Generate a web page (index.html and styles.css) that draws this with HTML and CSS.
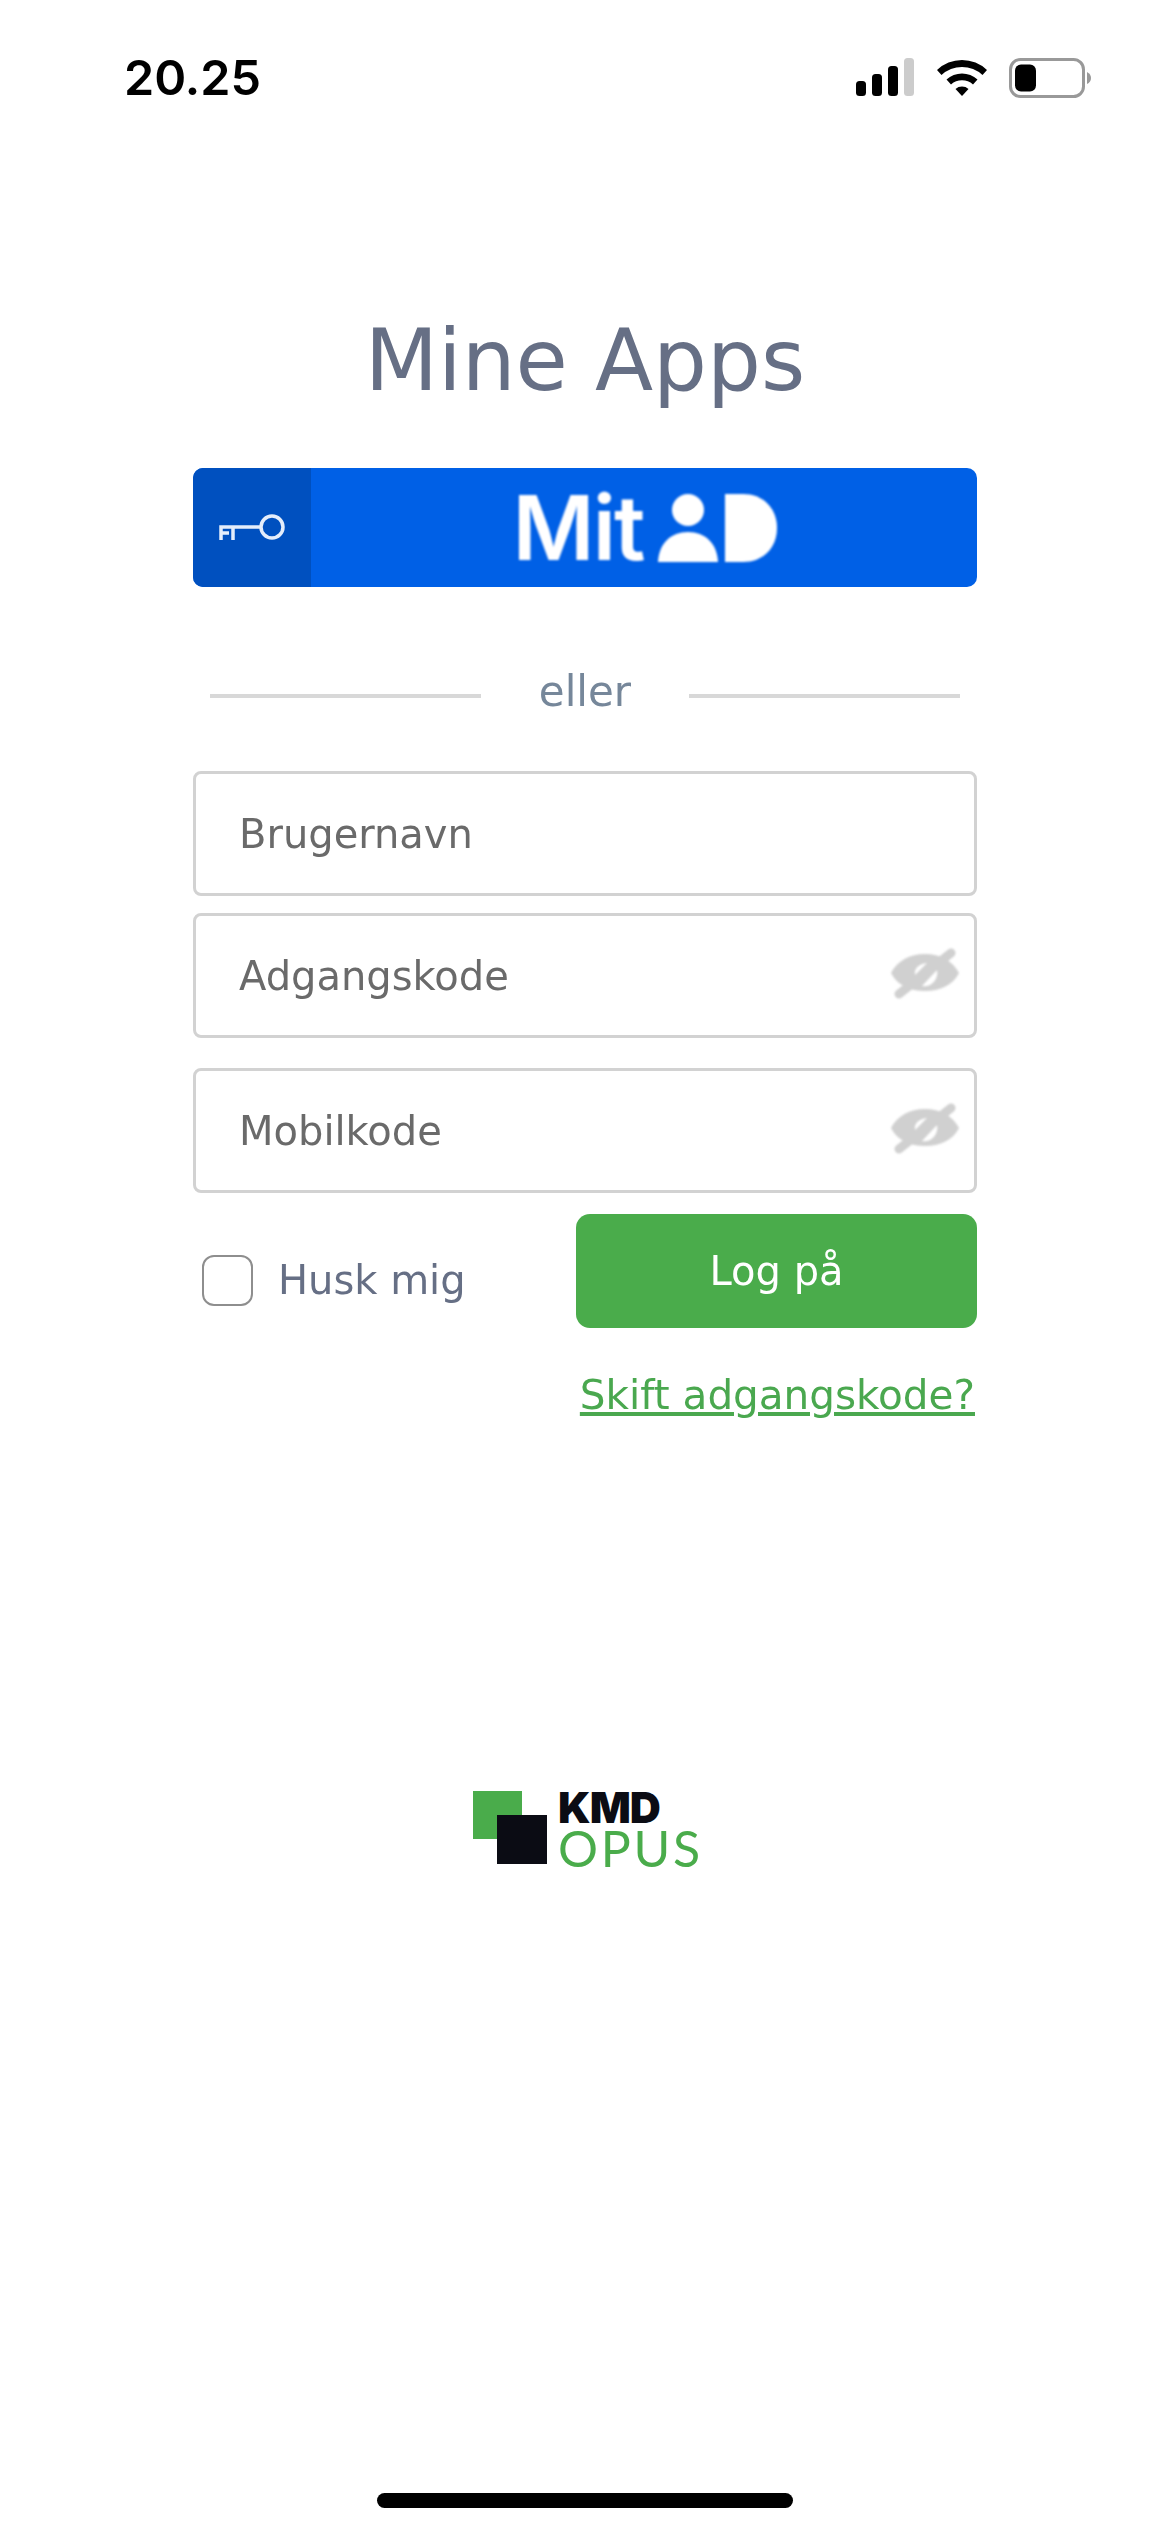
FILE: index.html
```html
<!DOCTYPE html>
<html lang="da">
<head>
<meta charset="utf-8">
<title>Mine Apps</title>
<link rel="stylesheet" href="styles.css">
</head>
<body>
<div class="screen">
  <header class="status">
    <span class="time">20.25</span>
    <div class="status-icons">
      <svg class="signal" width="58" height="38" viewBox="0 0 58 38">
        <rect x="0" y="23" width="10" height="15" rx="3.5" fill="#000"/>
        <rect x="16" y="16" width="10" height="22" rx="3.5" fill="#000"/>
        <rect x="32" y="8" width="10" height="30" rx="3.5" fill="#000"/>
        <rect x="48" y="0" width="10" height="38" rx="3.5" fill="#ccc"/>
      </svg>
      <svg class="wifi" width="50" height="38" viewBox="0 0 50 38">
        <path d="M0 12 A36 36 0 0 1 50 12 L45.500 17 A30 30 0 0 0 4.500 17 Z" fill="#000"/>
        <path d="M9.500 21.500 A23 23 0 0 1 40.500 21.500 L36 26.500 A16.500 16.500 0 0 0 14 26.500 Z" fill="#000"/>
        <path d="M18.500 31 A10 10 0 0 1 31.500 31 L25 38 Z" fill="#000"/>
      </svg>
      <svg class="battery" width="82" height="40" viewBox="0 0 82 40">
        <rect x="1.500" y="1.500" width="73" height="37" rx="10" fill="none" stroke="#999" stroke-width="3"/>
        <rect x="6" y="6.500" width="21" height="27" rx="6" fill="#000"/>
        <path d="M78 14 Q82 16 82 20 Q82 24 78 26 Z" fill="#999"/>
      </svg>
    </div>
  </header>

  <main class="login">
    <h1 class="title">Mine Apps</h1>

    <a class="mitid">
      <span class="mitid-key">
        <svg width="68" height="28" viewBox="0 0 68 28">
          <circle cx="54" cy="13" r="11" fill="none" stroke="#e4edfb" stroke-width="3.500"/>
          <path d="M43 13 H3 V26 M15 13 V26 M3 19 H11" fill="none" stroke="#e4edfb" stroke-width="3.500"/>
        </svg>
      </span>
      <span class="mitid-logo">
        <span class="mitid-word">Mit</span>
        <svg class="mitid-person" width="60" height="68" viewBox="0 0 60 68">
          <circle cx="30" cy="16" r="16" fill="#fff"/>
          <path d="M0 68 C1 49 13 38 30 38 C47 38 59 49 60 68 Z" fill="#fff"/>
        </svg>
        <svg class="mitid-d" width="52" height="68" viewBox="0 0 52 68">
          <path d="M0 0 H18 C38 0 52 14 52 34 C52 54 38 68 18 68 H0 Z" fill="#fff"/>
        </svg>
      </span>
    </a>

    <div class="divider">
      <span class="divider-line"></span>
      <span class="divider-text">eller</span>
      <span class="divider-line"></span>
    </div>

    <div class="field field-user"><span class="field-label">Brugernavn</span></div>
    <div class="field field-code">
      <span class="field-label">Adgangskode</span>
      <svg class="eye" width="70" height="52" viewBox="0 0 70 52">
        <path fill="#d0d0d0" fill-rule="evenodd" d="M1 26 C7 14 20 7 35 7 C50 7 63 14 69 26 C63 38 50 44 35 44 C20 44 7 38 1 26 Z M25 28 C24 21 29 17 37 16 Z M47 23 C49 32 41 41 32 39 Z"/>
        <path stroke="#d0d0d0" stroke-width="9" stroke-linecap="round" d="M9 47 L61 6"/>
      </svg>
    </div>
    <div class="field field-mobile">
      <span class="field-label">Mobilkode</span>
      <svg class="eye" width="70" height="52" viewBox="0 0 70 52">
        <path fill="#d0d0d0" fill-rule="evenodd" d="M1 26 C7 14 20 7 35 7 C50 7 63 14 69 26 C63 38 50 44 35 44 C20 44 7 38 1 26 Z M25 28 C24 21 29 17 37 16 Z M47 23 C49 32 41 41 32 39 Z"/>
        <path stroke="#d0d0d0" stroke-width="9" stroke-linecap="round" d="M9 47 L61 6"/>
      </svg>
    </div>

    <div class="actions">
      <label class="remember">
        <span class="checkbox"></span>
        <span class="remember-text">Husk mig</span>
      </label>
      <button class="submit"><span class="submit-text">Log på</span></button>
    </div>

    <a class="change-link">Skift adgangskode?</a>
  </main>

  <div class="brand">
    <div class="brand-mark">
      <span class="mark-green"></span>
      <span class="mark-dark"></span>
    </div>
    <div class="brand-text">
      <span class="brand-kmd">KMD</span>
      <span class="brand-opus">OPUS</span>
    </div>
  </div>

  <div class="home-bar"></div>
</div>
</body>
</html>
```
FILE: styles.css
```css
* { box-sizing: border-box; }
html, body { margin: 0; padding: 0; background: #fff; }
.screen {
  width: 1170px;
  height: 2532px;
  display: flex;
  flex-direction: column;
  align-items: center;
  font-family: "DejaVu Sans", sans-serif;
}
.status {
  width: 100%;
  height: 106px;
  padding: 50px 79px 0 124px;
  display: flex;
  justify-content: space-between;
  align-items: flex-start;
}
.time {
  font-family: Inter, sans-serif;
  font-size: 48.500px;
  font-weight: 600;
  line-height: 56px;
  color: #000;
}
.status-icons { display: flex; align-items: flex-start; margin-top: 8px; }
.signal { margin-right: 23px; }
.wifi { margin-right: 22px; }

.login { width: 784px; display: flex; flex-direction: column; }
.title {
  margin: 205px 0 0;
  height: 157px;
  text-align: center;
  font-size: 85px;
  font-weight: 400;
  line-height: 99px;
  color: #666f85;
  filter: blur(0.4px);
}
.mitid {
  height: 119px;
  border-radius: 10px;
  background: #0060e6;
  display: flex;
  overflow: hidden;
}
.mitid-key {
  width: 118px;
  background: #0050bf;
  display: flex;
  align-items: center;
  justify-content: center;
  filter: blur(0.6px);
}
.mitid-logo {
  flex: 1;
  display: flex;
  align-items: center;
  justify-content: center;
  padding-left: 2px;
  filter: blur(0.8px);
}
.mitid-word {
  font-family: Inter, sans-serif;
  font-size: 89px;
  font-weight: 600;
  line-height: 92px;
  letter-spacing: -2px;
  color: #fff;
}
.mitid-person { margin-left: 15px; }
.mitid-d { margin-left: 7px; }
.divider {
  margin-top: 80px;
  height: 50px;
  padding: 0 17px;
  display: flex;
  align-items: center;
  justify-content: space-between;
}
.divider-line { width: 271px; height: 4px; margin-top: 8px; background: #d8d8d8; }
.divider-text { font-size: 42px; line-height: 50px; color: #76879a; filter: blur(0.4px); }
.field {
  height: 125px;
  border: 3px solid #d2d2d2;
  border-radius: 8px;
  padding: 0 14px 0 43px;
  display: flex;
  align-items: center;
  justify-content: space-between;
  font-size: 40px;
  color: #6a6a6a;
}
.field-label { filter: blur(0.4px); }
.field-user { margin-top: 54px; }
.field-code { margin-top: 17px; }
.field-mobile { margin-top: 30px; }
.eye { margin-bottom: 6px; filter: blur(1.2px); }
.actions {
  margin-top: 21px;
  display: flex;
  justify-content: space-between;
  align-items: flex-start;
}
.remember { display: flex; align-items: center; margin: 41px 0 0 9px; }
.checkbox {
  width: 51px;
  height: 51px;
  border: 2px solid #8e8e8e;
  border-radius: 12px;
}
.remember-text { margin-left: 25px; font-size: 40px; line-height: 51px; color: #666f85; filter: blur(0.4px); }
.submit {
  width: 401px;
  height: 114px;
  border: 0;
  border-radius: 14px;
  background: #4aac4b;
  color: #fff;
  font-family: inherit;
  font-size: 40px;
  padding: 0;
}
.submit-text { display: block; filter: blur(0.3px); }
.change-link {
  margin-top: 43px;
  align-self: flex-end;
  margin-right: 2px;
  font-size: 40.500px;
  line-height: 48px;
  color: #4aa84f;
  text-decoration: underline;
  filter: blur(0.4px);
}
.brand {
  margin-top: 372px;
  margin-left: 6px;
  display: flex;
  align-items: flex-start;
}
.brand-mark { position: relative; width: 74px; height: 73px; }
.mark-green { position: absolute; left: 0; top: 0; width: 49px; height: 48px; background: #4aac4b; }
.mark-dark { position: absolute; left: 24px; top: 24px; width: 50px; height: 49px; background: #0b0c14; }
.brand-text { margin-left: 11px; display: flex; flex-direction: column; }
.brand-kmd {
  font-family: Inter, sans-serif;
  font-size: 43px;
  font-weight: 900;
  line-height: 32px;
  letter-spacing: -1px;
  color: #0b0c14;
}
.brand-opus {
  font-family: Lato, sans-serif;
  font-size: 50px;
  font-weight: 400;
  line-height: 50px;
  letter-spacing: 2.700px;
  color: #4aac4b;
}
.home-bar {
  margin-top: auto;
  margin-bottom: 24px;
  width: 416px;
  height: 15px;
  border-radius: 8px;
  background: #000;
}
```
